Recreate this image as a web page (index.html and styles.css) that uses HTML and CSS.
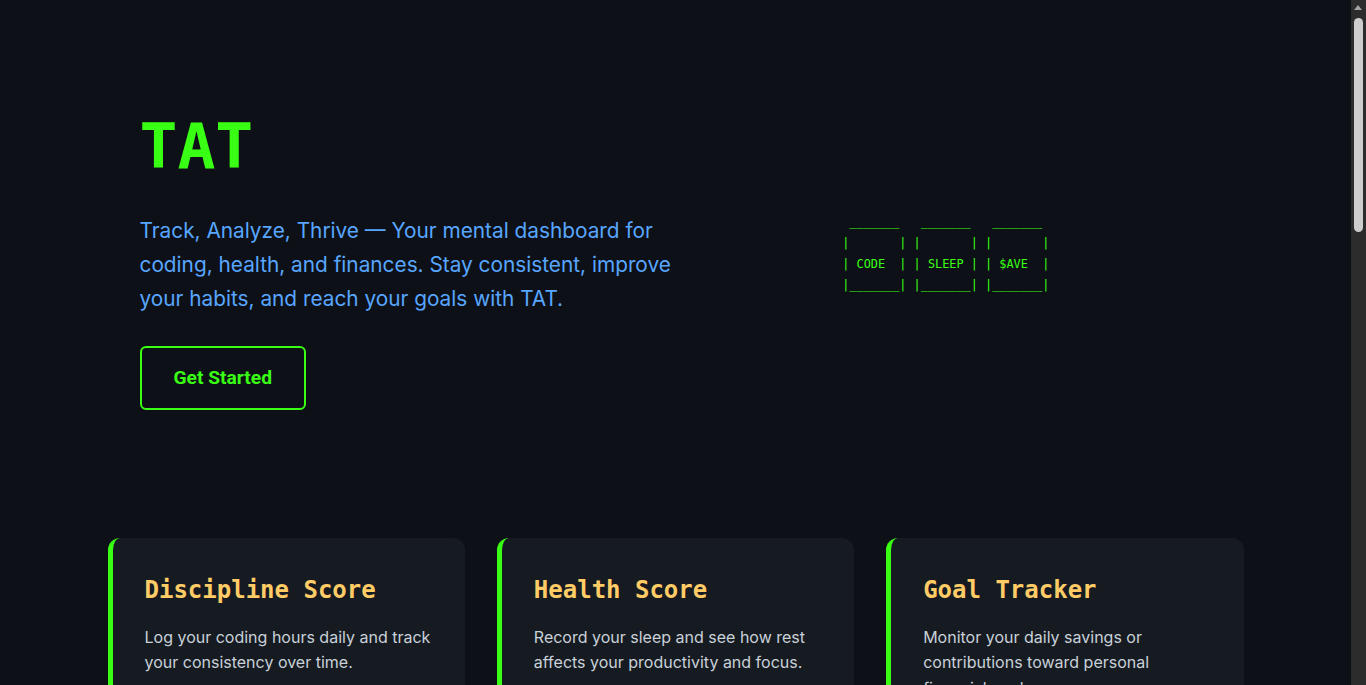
FILE: index.html
```html
<!DOCTYPE html>
<html lang="en">
<head>
<meta charset="utf-8">
<title>TAT — Track, Analyze, Thrive</title>
<link rel="stylesheet" href="styles.css">
</head>
<body>
<main class="container">
  <section class="hero">
    <div class="hero-text">
      <h1 class="logo">TAT</h1>
      <p class="tagline">Track, Analyze, Thrive — Your mental dashboard for coding, health, and finances. Stay consistent, improve your habits, and reach your goals with TAT.</p>
      <button class="btn">Get Started</button>
    </div>
    <div class="hero-art">
<pre class="ascii"> _______   _______   _______ 
|       | |       | |       |
| CODE  | | SLEEP | | $AVE  |
|_______| |_______| |_______|</pre>
    </div>
  </section>

  <section class="features">
    <article class="card">
      <h3>Discipline Score</h3>
      <p>Log your coding hours daily and track your consistency over time.</p>
    </article>
    <article class="card">
      <h3>Health Score</h3>
      <p>Record your sleep and see how rest affects your productivity and focus.</p>
    </article>
    <article class="card">
      <h3>Goal Tracker</h3>
      <p>Monitor your daily savings or contributions toward personal financial goals.</p>
    </article>
  </section>

  <section class="how">
    <h2>How It Works</h2>
    <div class="steps">
      <div class="step"><span class="num">01</span><h3>Log</h3><p>Enter your coding hours, sleep and savings each day in seconds.</p></div>
      <div class="step"><span class="num">02</span><h3>Analyze</h3><p>TAT turns your entries into scores and trends you can read at a glance.</p></div>
      <div class="step"><span class="num">03</span><h3>Thrive</h3><p>Spot patterns, adjust your habits and keep moving toward your goals.</p></div>
    </div>
  </section>

  <section class="cta">
    <h2>Ready to take control?</h2>
    <p>Start tracking today and build habits that last.</p>
    <button class="btn">Get Started</button>
  </section>

  <footer class="footer">© 2024 TAT — Track, Analyze, Thrive</footer>
</main>

<div class="scrollbar" aria-hidden="true">
  <span class="scroll-arrow"></span>
  <span class="scroll-thumb"></span>
</div>
</body>
</html>
```

FILE: styles.css
```css
* { box-sizing: border-box; }

html, body {
  margin: 0;
  padding: 0;
  background: #0d1117;
  color: #c9d1d9;
  font-family: "Inter", "Noto Sans", sans-serif;
}

body {
  margin-right: 15px;
}

.container {
  max-width: 1200px;
  margin: 0 auto;
  padding: 0 32px;
}

.hero {
  display: flex;
  align-items: center;
  padding: 108.7px 32px 128px;
}

.hero-text {
  flex: 1;
}

.hero-art {
  flex: 1;
  display: flex;
  justify-content: center;
  padding-left: 9px;
}

.logo {
  margin: 0 0 30px;
  font-family: "DejaVu Sans Mono", monospace;
  font-size: 63px;
  line-height: 1.2;
  font-weight: 700;
  color: #39ff14;
}

.tagline {
  margin: 0 0 30px;
  font-size: 20.8px;
  line-height: 34px;
  color: #58a6ff;
}

.btn {
  background: transparent;
  border: 2px solid #39ff14;
  border-radius: 6px;
  color: #39ff14;
  font-family: "Roboto", sans-serif;
  font-weight: 700;
  font-size: 19.2px;
  line-height: 28px;
  padding: 16px 32px;
  cursor: pointer;
}

.ascii {
  margin: 0 0 10px;
  font-family: "DejaVu Sans Mono", monospace;
  font-size: 11.86px;
  line-height: 21px;
  color: #39ff14;
}

.features {
  display: grid;
  grid-template-columns: repeat(3, 1fr);
  gap: 32px;
}

.card {
  background: #161b22;
  border-left: 5px solid #39ff14;
  border-radius: 12px;
  padding: 32px;
}

.card h3 {
  margin: 2px 0 17px;
  font-family: "DejaVu Sans Mono", monospace;
  font-size: 24px;
  line-height: 36px;
  font-weight: 700;
  color: #ffcc66;
}

.card p {
  margin: 0;
  font-size: 16px;
  line-height: 25.2px;
  color: #c9d1d9;
}

.how {
  padding: 160px 32px 40px;
}

.how h2, .cta h2 {
  margin: 0 0 40px;
  font-family: "DejaVu Sans Mono", monospace;
  font-size: 36px;
  color: #39ff14;
}

.steps {
  display: grid;
  grid-template-columns: repeat(3, 1fr);
  gap: 32px;
}

.step {
  background: #161b22;
  border-radius: 12px;
  padding: 32px;
}

.step .num {
  font-family: "DejaVu Sans Mono", monospace;
  color: #58a6ff;
  font-size: 18px;
}

.step h3 {
  margin: 12px 0 12px;
  font-family: "DejaVu Sans Mono", monospace;
  font-size: 22px;
  color: #ffcc66;
}

.step p {
  margin: 0;
  line-height: 1.6;
}

.cta {
  padding: 200px 32px 200px;
  text-align: center;
}

.cta p {
  margin: 0 0 32px;
  font-size: 20px;
  color: #58a6ff;
}

.footer {
  padding: 40px 0 60px;
  border-top: 1px solid #21262d;
  text-align: center;
  font-size: 14px;
  color: #8b949e;
}

/* fake browser scrollbar (overlay on the right edge) */
.scrollbar {
  position: fixed;
  top: 0;
  right: 0;
  width: 15px;
  height: 100vh;
  background: #2c2c2c;
}

.scroll-arrow {
  position: absolute;
  top: 5px;
  left: 3px;
  width: 0;
  height: 0;
  border-left: 4.5px solid transparent;
  border-right: 4.5px solid transparent;
  border-bottom: 5px solid #a3a3a3;
}

.scroll-thumb {
  position: absolute;
  top: 18px;
  left: 3px;
  width: 9px;
  height: 214px;
  border-radius: 5px;
  background: #cdcdcd;
}
```
